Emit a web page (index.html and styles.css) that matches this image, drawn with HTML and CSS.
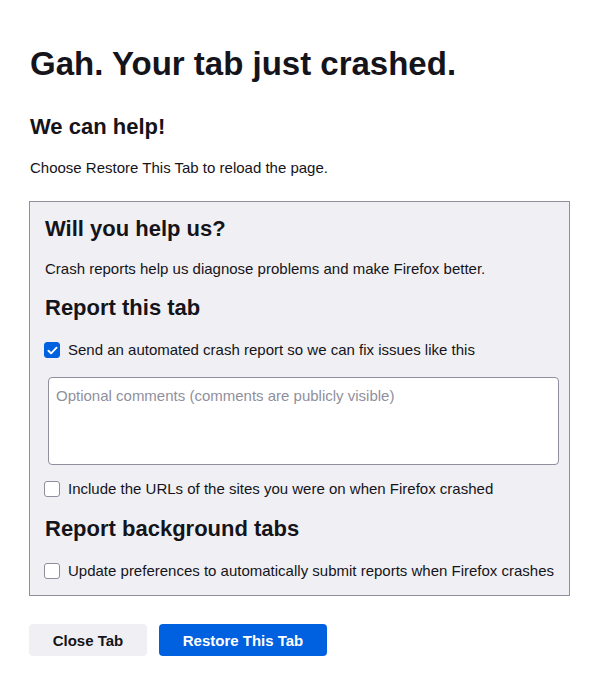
FILE: index.html
```html
<!DOCTYPE html>
<html>
<head>
<meta charset="utf-8">
<link rel="stylesheet" href="styles.css">
</head>
<body>
<main class="page">
  <h1 class="title">Gah. Your tab just crashed.</h1>
  <h2 class="subtitle">We can help!</h2>
  <p class="text">Choose Restore This Tab to reload the page.</p>
  <section class="panel">
    <h2 class="panel-title">Will you help us?</h2>
    <p class="text">Crash reports help us diagnose problems and make Firefox better.</p>
    <h2 class="panel-title section">Report this tab</h2>
    <label class="check-row">
      <span class="box checked"><svg viewBox="0 0 16 16" width="13" height="13"><path d="M3 8.3l3.3 3.2L13 4.5" fill="none" stroke="#fff" stroke-width="2.3" stroke-linecap="round" stroke-linejoin="round"/></svg></span>
      <span>Send an automated crash report so we can fix issues like this</span>
    </label>
    <div class="comments">Optional comments (comments are publicly visible)</div>
    <label class="check-row after-comments">
      <span class="box"></span>
      <span>Include the URLs of the sites you were on when Firefox crashed</span>
    </label>
    <h2 class="panel-title section bg-section">Report background tabs</h2>
    <label class="check-row">
      <span class="box"></span>
      <span>Update preferences to automatically submit reports when Firefox crashes</span>
    </label>
  </section>
  <div class="buttons">
    <button class="btn secondary">Close Tab</button>
    <button class="btn primary">Restore This Tab</button>
  </div>
</main>
</body>
</html>
```
FILE: styles.css
```css
* { box-sizing: border-box; }
html, body { margin: 0; padding: 0; background: #fff; }
body {
  font-family: "Liberation Sans", Arial, sans-serif;
  color: #15141a;
  font-size: 15px;
}
.page {
  padding: 40px 0 0 29px;
  width: 570px;
}
.title {
  margin: 0 0 0 1px;
  font-size: 33px;
  line-height: 48px;
  font-weight: bold;
}
.subtitle {
  margin: 24px 0 0 1px;
  font-size: 22px;
  line-height: 30px;
  font-weight: bold;
}
.text {
  margin: 0;
  font-size: 15px;
  line-height: 20px;
}
.page > .text { margin: 16px 0 0 1px; }
.panel {
  margin-top: 23px;
  width: 541px;
  border: 1px solid #8f8f9d;
  background: #f0f0f4;
  padding: 12px 10px 14px 15px;
}
.panel-title {
  margin: 0;
  font-size: 22px;
  line-height: 30px;
  font-weight: bold;
}
.panel .text { margin-top: 15px; }
.section { margin-top: 14px; }
.section.bg-section { margin-top: 15px; }
.check-row {
  display: flex;
  align-items: center;
  gap: 8px;
  margin: 17px 0 0 -1px;
  font-size: 15px;
  line-height: 20px;
}
.box {
  flex: none;
  width: 16px;
  height: 16px;
  border: 1px solid #8f8f9d;
  border-radius: 3px;
  background: #fff;
  display: flex;
  align-items: center;
  justify-content: center;
}
.box.checked { background: #0061e0; border-color: #0061e0; }
.comments {
  margin: 17px 0 0 3px;
  height: 88px;
  border: 1px solid #8f8f9d;
  border-radius: 4px;
  background: #fff;
  color: #8f8f9d;
  padding: 8px 7px;
  font-size: 15px;
  line-height: 20px;
}
.check-row.after-comments { margin-top: 14px; }
.buttons {
  display: flex;
  gap: 12px;
  margin-top: 28px;
}
.btn {
  font-family: "Liberation Sans", Arial, sans-serif;
  font-size: 15px;
  font-weight: bold;
  height: 32px;
  border: none;
  border-radius: 4px;
  padding: 0;
  white-space: nowrap;
}
.secondary { background: #f0f0f4; color: #15141a; width: 118px; }
.primary { background: #0061e0; color: #fff; width: 168px; }
```
